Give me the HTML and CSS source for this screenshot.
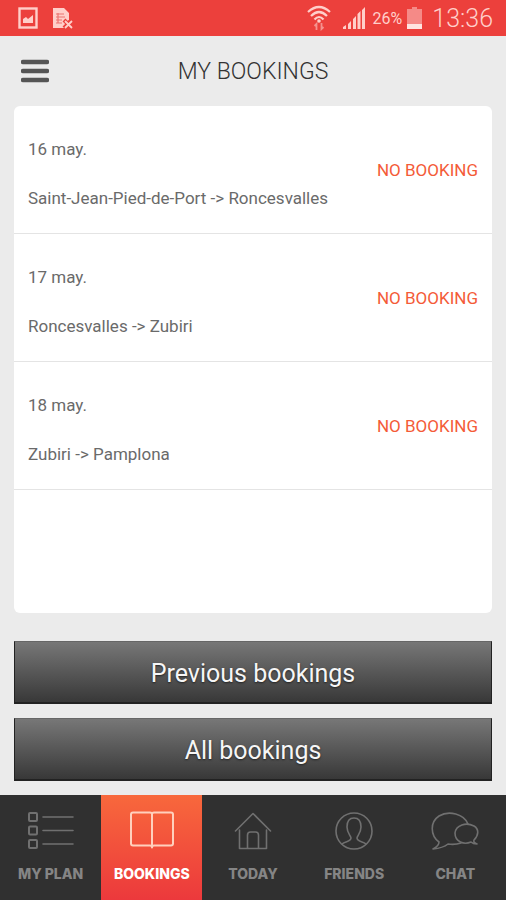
FILE: index.html
```html
<!DOCTYPE html>
<html lang="en">
<head>
<meta charset="utf-8">
<meta name="viewport" content="width=device-width, initial-scale=1">
<title>My bookings</title>
<link rel="stylesheet" href="styles.css">
</head>
<body>
<div class="app">
  <div class="status">
    <svg class="status-icon" width="20" height="22" viewBox="0 0 20 22" aria-hidden="true"><rect x="1.5" y="1.5" width="17" height="19" fill="none" stroke="currentColor" stroke-width="2.4"/><path d="M5 16v-4l3-2 2 2 5-4v8z" fill="currentColor"/></svg>
    <svg class="status-icon notice" width="22" height="22" viewBox="0 0 22 22" aria-hidden="true"><path d="M1 1h11l5 5v7l-4 3v5H1z" fill="currentColor"/><path d="M4 7h8M4 10h9M4 13h6M4 16h6M6 6v10" stroke="#ec7470" stroke-width="1.2" fill="none"/><path d="M12 13l8 8M20 13l-8 8" stroke="#ec403c" stroke-width="4"/><path d="M13 14l7 7M20 14l-7 7" stroke="currentColor" stroke-width="1.8"/></svg>
    <svg class="wifi" width="24" height="26" viewBox="0 0 24 26" aria-hidden="true"><g fill="none" stroke="currentColor" stroke-width="2.2"><path d="M1 7Q12-3 23 7M4 11Q12 3 20 11M7.500 14.500Q12 9.500 16.500 14.500"/></g><circle cx="12" cy="16" r="1.800" fill="currentColor"/><path d="M9.500 25v-6l-2 2M14.500 18v6l2-2" fill="none" stroke="#f4928e" stroke-width="1.800"/></svg>
    <svg class="signal" width="24" height="24" viewBox="0 0 24 24" aria-hidden="true"><path d="M1 23v-2l3-2v4zM6 23v-5l3-3v8zM11 23V13l3-3v13zM15.500 23V8l3-3v18zM20 23V4l3-3v22z" fill="currentColor"/></svg>
    <span class="percent">26%</span>
    <svg class="battery" width="15" height="24" viewBox="0 0 15 24" aria-hidden="true"><path d="M5 1h5v2h5v20H0V3h5z" fill="#f58a87"/><path d="M0 18h15v5H0z" fill="#ffe4e0"/></svg>
    <span class="clock">13:36</span>
  </div>
  <header class="header">
    <button class="menu" aria-label="Menu"><svg width="28" height="24" viewBox="0 0 28 24" aria-hidden="true"><path d="M2 3h24M2 12h24M2 21h24" stroke="#555" stroke-width="4.400" stroke-linecap="round"/></svg></button>
    <h1>MY BOOKINGS</h1>
  </header>
  <main class="main">
    <ul class="list">
      <li><div><p>16 may.</p><p>Saint-Jean-Pied-de-Port -&gt; Roncesvalles</p></div><span class="state">NO BOOKING</span></li>
      <li><div><p>17 may.</p><p>Roncesvalles -&gt; Zubiri</p></div><span class="state">NO BOOKING</span></li>
      <li><div><p>18 may.</p><p>Zubiri -&gt; Pamplona</p></div><span class="state">NO BOOKING</span></li>
    </ul>
    <div class="actions">
      <button>Previous bookings</button>
      <button>All bookings</button>
    </div>
  </main>
  <nav class="tabs">
    <a href="#plan"><svg width="48" height="40" viewBox="0 0 48 40" aria-hidden="true"><rect x="2" y="2" width="8" height="8" rx="1" stroke-width="2"/><rect x="2" y="15.500" width="8" height="8" rx="1" stroke-width="2"/><rect x="2" y="29" width="8" height="8" rx="1" stroke-width="2"/><path d="M16 6h30M16 19.500h30M16 33h30"/></svg>MY PLAN</a>
    <a href="#bookings" class="active" aria-current="page"><svg width="48" height="40" viewBox="0 0 48 40" aria-hidden="true"><path d="M5 1.500h17q2 0 2 1.500 0-1.500 2-1.500h17q2 0 2 2v29q0 2-2 2H26q-2 0-2 2 0-2-2-2H5q-2 0-2-2v-29q0-2 2-2zM24 3v33"/></svg>BOOKINGS</a>
    <a href="#today"><svg width="48" height="40" viewBox="0 0 48 40" aria-hidden="true"><path d="M6.500 20L24 2.500 41.500 20M10.500 19v18.500h27V19M18.500 37.500V24q0-3 3-3h5q3 0 3 3v13.500"/></svg>TODAY</a>
    <a href="#friends"><svg width="48" height="40" viewBox="0 0 48 40" aria-hidden="true"><circle cx="24" cy="20" r="18"/><path d="M12 33c3-3 9-2 9-6 0-2-4-5-4-11 0-6 2-9 7-9s7 3 7 9-4 9-4 11c0 4 6 3 9 6"/></svg>FRIENDS</a>
    <a href="#chat"><svg width="48" height="40" viewBox="0 0 48 40" aria-hidden="true"><path d="M30 32q-6 2-13 1-5 4-15 5c4-2 6-4 6-7C-1 24-1 11 8 5c10-6 25-2 29 8"/><path d="M46 33c-2-1-4-2-3-4 5-5 5-11 0-14-8-4-18-1-19 7 0 9 9 12 16 9 2 2 4 2 6 2z"/></svg>CHAT</a>
  </nav>
</div>
</body>
</html>
```
FILE: styles.css
```css
* { box-sizing: border-box; }
body { margin: 0; background: #ebebeb; font-family: Roboto, "Liberation Sans", sans-serif; color: #6a6a6a; }
button { font: inherit; cursor: pointer; }
h1, p, ul { margin: 0; padding: 0; }
.app { min-height: 100vh; display: flex; flex-direction: column; }
.status { height: 36px; padding: 0 13px 0 18px; display: flex; align-items: center; background: #ec403c; color: #ffcfca; }
.notice { margin-left: 14px; }
.wifi { margin-left: auto; }
.signal { margin: 0 7px 0 11px; }
.percent { font-size: 16px; }
.battery { margin: 0 10px 0 5px; }
.clock { font-size: 25px; line-height: 34px; padding-top: 2px; font-weight: 300; }
.header { height: 70px; padding: 0 14px; display: grid; grid-template-columns: 42px 1fr 42px; align-items: center; }
.menu { display: flex; justify-content: center; padding: 0; border: 0; background: none; }
h1 { font-size: 23px; font-weight: 300; text-align: center; color: #333; }
.main { flex: 1; display: flex; flex-direction: column; gap: 28px; padding: 0 14px 14px; }
.list { flex: 1; list-style: none; background: #fff; border-radius: 6px; }
.list li { display: flex; justify-content: space-between; padding: 33px 14px 25px; border-bottom: 1px solid #e4e4e4; }
.list p { font-size: 17px; line-height: 20px; }
.list p + p { margin-top: 29px; }
.state { margin-top: 21px; font-size: 17px; line-height: 20px; color: #f45b38; white-space: nowrap; }
.actions { display: grid; gap: 14px; }
.actions button { height: 63px; padding: 2px 0 0; border: 1px solid #222; border-width: 1px 1px 2px; border-top-color: #666; background: linear-gradient(#777, #383838); color: #f6f6f6; font-size: 25px; text-shadow: 0 1px 2px #222; }
.tabs { height: 105px; display: grid; grid-template-columns: repeat(5, 1fr); background: #303030; }
.tabs a { display: flex; flex-direction: column; align-items: center; gap: 15px; padding-top: 16px; color: #858585; text-decoration: none; font: 800 14px/16px Inter, "Open Sans", sans-serif; }
.tabs svg { flex: none; fill: none; stroke: #707070; stroke-width: 1.6; stroke-linejoin: round; stroke-linecap: round; }
.tabs .active { background: linear-gradient(#f8683c, #ec393c); color: #fff; }
.tabs .active svg { stroke: #ffd0bd; stroke-width: 2; }
```
